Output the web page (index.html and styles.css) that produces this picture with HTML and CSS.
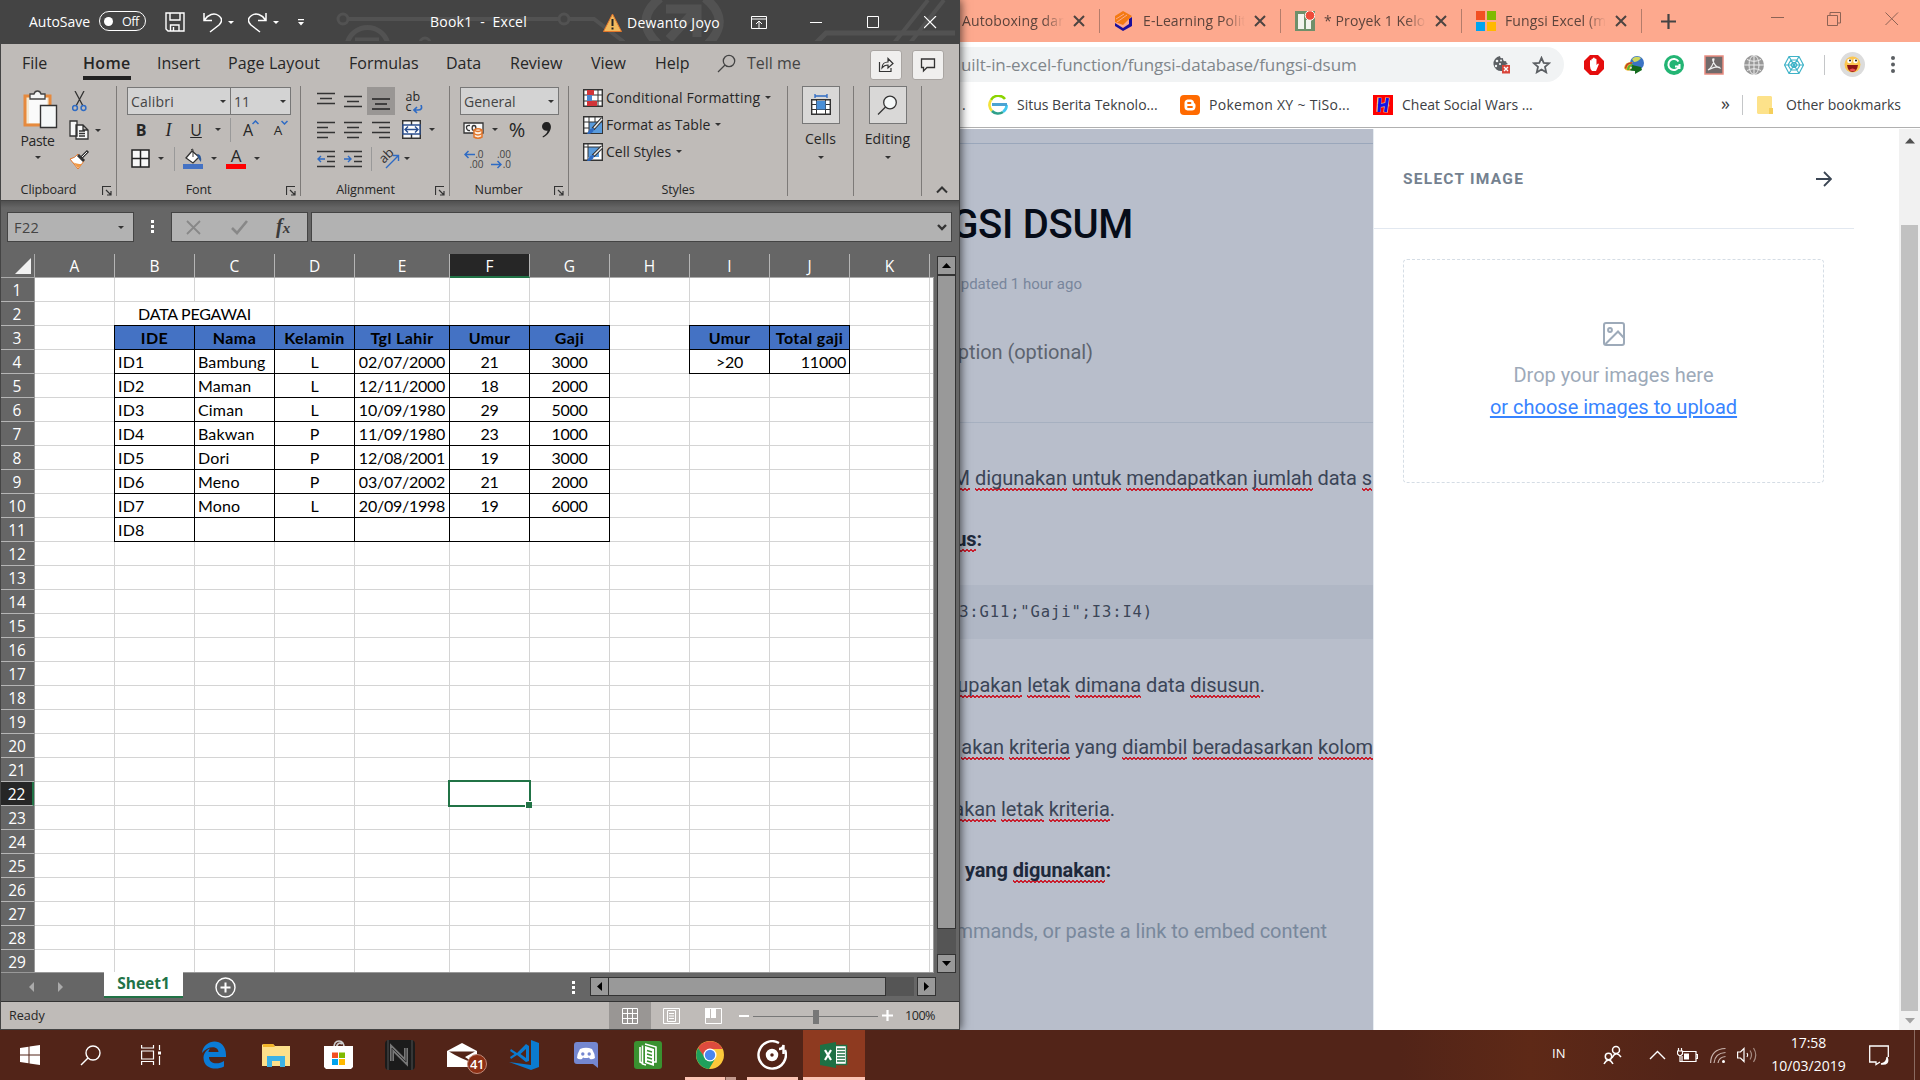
FILE: index.html
```html
<!DOCTYPE html>
<html lang="id">
<head>
<meta charset="utf-8">
<title>Book1 - Excel</title>
<link rel="stylesheet" href="styles.css">
</head>
<body>
<div class="desktop">
<main class="windows">

<section class="excel">
  <header class="xl-title">
    <svg class="circuit" width="624" height="41" viewBox="336 0 624 41" fill="none" stroke="#525252" stroke-width="5">
      <circle cx="343" cy="19" r="5" stroke-width="3"/><path d="M349 19H558M569 19H594L624 42M638 42" stroke-width="4"/><circle cx="564" cy="19" r="5" stroke-width="3"/>
      <path d="M347 44a21 21 0 0 1 41 0M355 40H379"/><circle cx="425" cy="43" r="5" stroke-width="3"/>
      <path d="M660 -2Q633 20 658 44M705 -2Q732 20 708 44" stroke-width="9"/><path d="M669 39L694 12M666 9H697V37" stroke-width="9"/>
      <path d="M816 43L826 33H955" stroke-width="5"/><path d="M894 43L928 0M910 43L944 0" stroke-width="4"/>
    </svg>
    <span>AutoSave</span>
    <span class="toggle"><i></i>Off</span>
    <svg width="20" height="20" viewBox="0 0 20 20" fill="none" stroke="#fff" stroke-width="1.4"><path d="M1 1H19V19H3L1 17ZM5 1V8H15V1M5.500 19V13H14V19M8.500 15V19"/></svg>
    <svg width="19" height="21" viewBox="0 0 19 21" fill="none" stroke="#fff" stroke-width="1.500"><path d="M1 1V8.500H9M1.500 8C5 2.500 11 .500 15.500 3.500S19 10 16 13L7 20"/></svg>
    <i class="caret light"></i>
    <svg width="19" height="21" viewBox="0 0 19 21" fill="none" stroke="#fff" stroke-width="1.500"><path d="M18 1V8.500H10M17.500 8C14 2.500 8 .500 3.500 3.500S0 10 3 13L12 20"/></svg>
    <i class="caret light"></i>
    <svg width="6" height="7" viewBox="0 0 6 7" fill="#fff"><path d="M0 0H6V1.300H0ZM0 3H6L3 6.500Z"/></svg>
    <span class="doc">Book1&nbsp; -&nbsp; Excel</span>
    <svg width="19" height="19" viewBox="0 0 19 19"><path d="M9.500 1L18.500 18.500H.500Z" fill="#f3ba5d" stroke="#e2762b"/><path d="M9.500 6V13M9.500 14.500V16.500" stroke="#222" stroke-width="2"/></svg>
    <span class="user">Dewanto Joyo</span>
    <svg width="16" height="13" viewBox="0 0 16 13" fill="none" stroke="#fff"><path d="M.500.500H15.500V12.500H.500ZM.500 3H15.500M8 12V5M5 8L8 5L11 8"/></svg>
    <svg width="13" height="13" viewBox="0 0 13 13" stroke="#fff"><path d="M0 6.500H12"/></svg>
    <svg width="13" height="13" viewBox="0 0 13 13" fill="none" stroke="#fff"><path d="M.500.500H11.500V11.500H.500Z"/></svg>
    <svg width="13" height="13" viewBox="0 0 13 13" stroke="#fff" stroke-width="1.200"><path d="M0 0L12 12M12 0L0 12"/></svg>
  </header>

  <nav class="xl-tabs">
    <span>File</span><b>Home</b><span>Insert</span><span class="wide">Page Layout</span><span>Formulas</span><span>Data</span><span>Review</span><span>View</span><span>Help</span>
    <svg width="19" height="19" viewBox="0 0 19 19" fill="none" stroke="#444" stroke-width="1.300"><circle cx="12" cy="7" r="5.700"/><path d="M8 11L1 18"/></svg>
    <span class="tell">Tell me</span>
    <button><svg width="16" height="16" viewBox="0 0 16 16" fill="none" stroke="#333" stroke-width="1.200"><path d="M1.500 5V14.500H13V11M4 11C4 7 7 5 10 5V1.500L15 6.500L10 11V8C7 8 5.500 9 4 11Z"/></svg></button>
    <button><svg width="16" height="16" viewBox="0 0 16 16" fill="none" stroke="#333" stroke-width="1.300"><path d="M1.500 2H14.500V10.500H7L3.500 14V10.500H1.500Z"/></svg></button>
  </nav>

  <div class="ribbon">
    <div class="group clipboard">
      <div class="body">
        <div class="paste">
          <svg width="36" height="40" viewBox="0 0 36 40"><path d="M2 6H27V35H2Z" fill="#f4ead4" stroke="#e68a3e" stroke-width="3"/><path d="M6 8H24V33H6Z" fill="#fafafa"/><path d="M7 9V4H11C12 0 17 0 18 4H22V9Z" fill="#f4f6f6" stroke="#444" stroke-width="1.300"/><path d="M17.500 15.500H33.500V37.500H17.500Z" fill="#f5f8f8" stroke="#333" stroke-width="1.400"/></svg>
          <span>Paste</span><i class="caret"></i>
        </div>
        <div class="clip-tools">
          <svg width="16" height="21" viewBox="0 0 16 21" fill="none"><path d="M3 0L11 15M12 0L4 15" stroke="#333" stroke-width="1.300"/><circle cx="3" cy="17" r="2.400" stroke="#2e6bc4" stroke-width="1.500"/><circle cx="11.500" cy="17" r="2.400" stroke="#2e6bc4" stroke-width="1.500"/></svg>
          <i></i>
          <svg width="21" height="21" viewBox="0 0 21 21" fill="#f8f8f8" stroke="#333" stroke-width="1.300"><path d="M1 1H8V16H1ZM7 5H14L19 10V19H7ZM14 5V10H19M10 11H16M10 13.500H16M10 16H16"/></svg>
          <i class="caret"></i>
          <svg width="21" height="20" viewBox="0 0 21 20"><path d="M1 9Q6 8 9 4L15 11Q12 15 9 19Z" fill="#fff" stroke="#e2762b"/><path d="M4 12L9 18L13 14Q7 14 4 12" fill="#f19a45"/><path d="M9 5L15 11M12 8L19 1" stroke="#333" stroke-width="3"/><path d="M13 7L18 2" stroke="#eee"/></svg>
          <i></i>
        </div>
      </div>
      <footer><span>Clipboard</span><svg class="launch"><use href="#launch"/></svg></footer>
    </div>

    <div class="group font">
      <div class="combos"><span class="combo cf">Calibri<i class="caret"></i></span><span class="combo cs">11<i class="caret"></i></span></div>
      <div class="row r-font1"><b class="g">B</b><em class="g">I</em><u class="g">U</u><i class="caret"></i><i class="bar"></i><span class="g grow">A<svg width="7" height="5" viewBox="0 0 7 5" fill="none" stroke="#2e6bc4" stroke-width="1.500"><path d="M.500 4L3.500 1L6.500 4"/></svg></span><span class="g shrink">A<svg width="7" height="5" viewBox="0 0 7 5" fill="none" stroke="#2e6bc4" stroke-width="1.500"><path d="M.500 1L3.500 4L6.500 1"/></svg></span></div>
      <div class="row r-font2">
        <svg width="19" height="19" viewBox="0 0 19 19" fill="#f7f7f7" stroke="#222" stroke-width="1.500"><path d="M1 1H18V18H1ZM9.500 1V18M1 9.500H18"/></svg><i class="caret"></i><i class="bar"></i>
        <svg width="20" height="21" viewBox="0 0 20 21"><path d="M9 3L16 9L10 15L3 10Z" fill="#fff" stroke="#333" stroke-width="1.300"/><path d="M10 9V2Q10 0 8 2" fill="none" stroke="#333"/><path d="M14 6Q19 6 18 14Q16 12 15 9" fill="#2b5797"/><path d="M0 16H20V21H0Z" fill="#4472c4"/></svg><i class="caret"></i>
        <span class="fcolor">A</span><i class="caret"></i>
      </div>
      <footer><span>Font</span><svg class="launch"><use href="#launch"/></svg></footer>
    </div>

    <div class="group align">
      <div class="row r-al1">
        <svg width="18" height="18" viewBox="0 0 18 18" stroke="#333" stroke-width="1.400"><path d="M0 1.500H18M3 6.500H15M0 11.500H18"/></svg>
        <svg width="18" height="18" viewBox="0 0 18 18" stroke="#333" stroke-width="1.400"><path d="M0 4.500H18M3 9.500H15M0 14.500H18"/></svg>
        <span class="on"><svg width="18" height="18" viewBox="0 0 18 18" stroke="#222" stroke-width="1.400"><path d="M0 7H18M3 12H15M0 17H18"/></svg></span>
        <span class="wrap"><span>ab</span><span>c</span><svg width="10" height="9" viewBox="0 0 10 9" fill="none" stroke="#2e6bc4" stroke-width="1.600"><path d="M8 0Q10 5 5 5H1M4 2L1 5L4 8"/></svg></span>
      </div>
      <div class="row r-al2">
        <svg width="18" height="18" viewBox="0 0 18 18" stroke="#333" stroke-width="1.400"><path d="M0 1.500H18M0 6.500H11M0 11.500H18M0 16.500H11"/></svg>
        <svg width="18" height="18" viewBox="0 0 18 18" stroke="#333" stroke-width="1.400"><path d="M0 1.500H18M3 6.500H15M0 11.500H18M3 16.500H15"/></svg>
        <svg width="18" height="18" viewBox="0 0 18 18" stroke="#333" stroke-width="1.400"><path d="M0 1.500H18M7 6.500H18M0 11.500H18M7 16.500H18"/></svg>
        <svg width="19" height="19" viewBox="0 0 19 19" fill="none" stroke="#2b4f8f" stroke-width="1.400"><path d="M.700.700H18.300V18.300H.700Z" fill="#f8f8f8" stroke="#333"/><path d="M9.500 1V5M9.500 14V18" stroke="#333"/><path d="M1 5H18V14H1Z" fill="#fff"/><path d="M3 9.500H16M6 6.500L3 9.500L6 12.500M13 6.500L16 9.500L13 12.500"/></svg>
        <i class="caret"></i>
      </div>
      <div class="row r-al3">
        <svg width="18" height="18" viewBox="0 0 18 18" fill="none" stroke="#333" stroke-width="1.400"><path d="M0 1.500H18M10 6.500H18M10 11.500H18M0 16.500H18"/><path d="M8 9H1M4 6L1 9L4 12" stroke="#2e6bc4"/></svg>
        <svg width="18" height="18" viewBox="0 0 18 18" fill="none" stroke="#333" stroke-width="1.400"><path d="M0 1.500H18M10 6.500H18M10 11.500H18M0 16.500H18"/><path d="M0 9H7M4 6L7 9L4 12" stroke="#2e6bc4"/></svg>
        <i class="bar"></i>
        <svg class="orient" width="21" height="20" viewBox="0 0 21 20"><text x="0" y="0" transform="translate(5 15) rotate(-45)">ab</text><path d="M7 19L19 7M14 6.500H19.500V12" fill="none" stroke="#2e6bc4" stroke-width="1.400"/></svg>
        <i class="caret"></i>
      </div>
      <footer><span>Alignment</span><svg class="launch"><use href="#launch"/></svg></footer>
    </div>

    <div class="group number">
      <div class="combos"><span class="combo cg">General<i class="caret"></i></span></div>
      <div class="row r-n1">
        <svg width="22" height="18" viewBox="0 0 22 18" fill="none"><path d="M1 2H20V12H1Z" fill="#f8f8f8" stroke="#333" stroke-width="1.300"/><path d="M7 4.500Q3 4 3.500 7T7 9.500M11 4.500C8.500 4.500 8.500 9.500 11 9.500S13.500 4.500 11 4.500" stroke="#333" stroke-width="1.300"/><path d="M11 9V16Q15 18.500 19 16V9Q15 6.500 11 9" fill="#fbeee0" stroke="#e2762b" stroke-width="1.500"/><path d="M11 9Q15 12 19 9M11 12.500Q15 15.500 19 12.500" stroke="#e2762b" stroke-width="1.300"/></svg>
        <i class="caret"></i><span class="pct">%</span>
        <svg width="11" height="17" viewBox="0 0 11 17" fill="#222"><path d="M5 1C12 0 12 12 2 16.500L1.500 15.500C5 13.500 6.500 11.500 6.500 9.500C0 11 -1 2 5 1"/></svg>
      </div>
      <div class="row r-n2">
        <span class="dec"><span>.0</span><span>.00</span><svg class="dl" width="11" height="9" viewBox="0 0 11 9" fill="none" stroke="#2e6bc4" stroke-width="1.500"><path d="M11 4.500H1M4.500 1L1 4.500L4.500 8"/></svg></span>
        <span class="dec"><span>.00</span><span>.0</span><svg class="dr" width="11" height="9" viewBox="0 0 11 9" fill="none" stroke="#2e6bc4" stroke-width="1.500"><path d="M0 4.500H10M6.500 1L10 4.500L6.500 8"/></svg></span>
      </div>
      <footer><span>Number</span><svg class="launch"><use href="#launch"/></svg></footer>
    </div>

    <div class="group styles">
      <div class="style-row"><svg width="20" height="18" viewBox="0 0 20 18"><path d="M.700.700H19.300V17.300H.700Z" fill="#fff" stroke="#333" stroke-width="1.400"/><path d="M.700 6H19M.700 12H19M5 1V17M15 1V17" stroke="#333"/><path d="M4 1H11V6H4ZM4 12H14V17H4Z" fill="#d13438"/><path d="M4 6H9V12H4Z" fill="#4a86d0"/></svg><span class="cfm">Conditional Formatting</span><i class="caret"></i></div>
      <div class="style-row"><svg width="20" height="18" viewBox="0 0 20 18"><path d="M.700.700H19.300V17.300H.700Z" fill="#fff" stroke="#333" stroke-width="1.400"/><path d="M6 6H19V17H6Z" fill="#5a9bdc"/><path d="M.700 6H19M.700 12H6M6 1V17M12 1V6" stroke="#333"/><path d="M19 3L10 13" stroke="#333" stroke-width="3.500"/><path d="M19 3L11 12" stroke="#eee" stroke-width="1.500"/><path d="M4 18Q7 11 11 12Q11 18 4 18" fill="#2e6bc4"/></svg><span>Format as Table</span><i class="caret"></i></div>
      <div class="style-row"><svg width="20" height="18" viewBox="0 0 20 18"><path d="M.700.700H19.300V17.300H.700Z" fill="#fff" stroke="#333" stroke-width="1.400"/><path d="M5 4H16V14H5Z" fill="#5a9bdc"/><path d="M.700 4H19M5 1V17" stroke="#333"/><path d="M19 4L10 13" stroke="#333" stroke-width="3.500"/><path d="M19 4L11 12" stroke="#eee" stroke-width="1.500"/><path d="M4 18Q7 11 11 12Q11 18 4 18" fill="#2e6bc4"/></svg><span>Cell Styles</span><i class="caret"></i></div>
      <footer><span>Styles</span></footer>
    </div>

    <div class="group big">
      <span class="tile"><svg width="20" height="22" viewBox="0 0 20 22"><path d="M.700 5.700H19.300V20.300H.700Z" fill="#fff" stroke="#333" stroke-width="1.400"/><path d="M.700 10.500H19M.700 15.500H19M5.500 6V20M14.500 6V20" stroke="#333"/><path d="M5.500 7H14.500V15.500H5.500Z" fill="#4a8fd6"/><path d="M4 2H16M4 0V4M16 0V4" stroke="#2e6bc4" stroke-width="1.300"/></svg></span>
      <span>Cells</span><i class="caret"></i>
    </div>
    <div class="group big">
      <span class="tile"><svg width="21" height="21" viewBox="0 0 21 21" fill="#f5f8f8" stroke="#333" stroke-width="1.300"><circle cx="13" cy="7.500" r="6.300"/><path d="M8.500 12L1 19.500"/></svg></span>
      <span>Editing</span><i class="caret"></i>
    </div>
    <div class="group end"><svg width="12" height="8" viewBox="0 0 12 8" fill="none" stroke="#333" stroke-width="2"><path d="M1 6.500L6 1.500L11 6.500"/></svg></div>
  </div>

  <div class="formula">
    <span class="namebox">F22<i class="caret"></i></span>
    <span class="dots"><i></i><i></i><i></i></span>
    <span class="fx">
      <svg width="15" height="15" viewBox="0 0 15 15" stroke="#888" stroke-width="1.800"><path d="M1 1L14 14M14 1L1 14"/></svg>
      <svg width="17" height="15" viewBox="0 0 17 15" fill="none" stroke="#888" stroke-width="2.600"><path d="M1 8L6 13L16 1"/></svg>
      <em>f<small>x</small></em>
    </span>
    <span class="fbar"><svg width="10" height="7" viewBox="0 0 10 7" fill="none" stroke="#333" stroke-width="2.400"><path d="M1 1L5 5L9 1"/></svg></span>
  </div>

  <div class="sheet-area">
    <div class="sheet">
      <span class="corner"><svg width="16" height="16" viewBox="0 0 16 16"><path d="M16 0V16H0Z" fill="#f1f1f1"/></svg></span>
      <div class="heads"><span>A</span><span>B</span><span>C</span><span>D</span><span class="e">E</span><span class="sel">F</span><span>G</span><span>H</span><span>I</span><span>J</span><span>K</span><span></span></div>
      <div class="nums"><span>1</span><span>2</span><span>3</span><span>4</span><span>5</span><span>6</span><span>7</span><span>8</span><span>9</span><span>10</span><span>11</span><span>12</span><span>13</span><span>14</span><span>15</span><span>16</span><span>17</span><span>18</span><span>19</span><span>20</span><span>21</span><span class="sel">22</span><span>23</span><span>24</span><span>25</span><span>26</span><span>27</span><span>28</span><span>29</span></div>
      <div class="canvas">
        <i class="col c1"></i><i class="col c2"></i><i class="col c3"></i><i class="col c4"></i><i class="col c5"></i><i class="col c6"></i><i class="col c7"></i><i class="col c8"></i><i class="col c9"></i><i class="col c10"></i><i class="col c11"></i>
        <div class="merged">DATA PEGAWAI</div>
        <div class="table main">
          <b>IDE</b><b>Nama</b><b>Kelamin</b><b>Tgl Lahir</b><b>Umur</b><b>Gaji</b>
          <span>ID1</span><span>Bambung</span><span>L</span><span>02/07/2000</span><span>21</span><span>3000</span>
          <span>ID2</span><span>Maman</span><span>L</span><span>12/11/2000</span><span>18</span><span>2000</span>
          <span>ID3</span><span>Ciman</span><span>L</span><span>10/09/1980</span><span>29</span><span>5000</span>
          <span>ID4</span><span>Bakwan</span><span>P</span><span>11/09/1980</span><span>23</span><span>1000</span>
          <span>ID5</span><span>Dori</span><span>P</span><span>12/08/2001</span><span>19</span><span>3000</span>
          <span>ID6</span><span>Meno</span><span>P</span><span>03/07/2002</span><span>21</span><span>2000</span>
          <span>ID7</span><span>Mono</span><span>L</span><span>20/09/1998</span><span>19</span><span>6000</span>
          <span>ID8</span><span></span><span></span><span></span><span></span><span></span>
        </div>
        <div class="table side"><b>Umur</b><b>Total gaji</b><span>&gt;20</span><span class="right">11000</span></div>
        <div class="cursor"></div>
      </div>
    </div>
    <div class="vscroll">
      <span class="sbtn"><svg width="9" height="5" viewBox="0 0 9 5"><path d="M0 5L4.500 0L9 5Z"/></svg></span>
      <span class="vthumb"></span><span class="vtrack"></span>
      <span class="sbtn"><svg width="9" height="5" viewBox="0 0 9 5"><path d="M0 0L4.500 5L9 0Z"/></svg></span>
    </div>
  </div>

  <div class="sheetbar">
    <svg width="5" height="10" viewBox="0 0 5 10" fill="#aaa"><path d="M5 0V10L0 5Z"/></svg>
    <svg width="5" height="10" viewBox="0 0 5 10" fill="#aaa"><path d="M0 0V10L5 5Z"/></svg>
    <b class="sheet-tab">Sheet1</b>
    <svg class="add" width="21" height="21" viewBox="0 0 21 21" fill="none" stroke="#fff"><circle cx="10.500" cy="10.500" r="9.500" stroke-width="1.400"/><path d="M10.500 5.500V15.500M5.500 10.500H15.500" stroke-width="2"/></svg>
    <span class="dots"><i></i><i></i><i></i></span>
    <div class="hscroll">
      <span class="sbtn"><svg width="5" height="9" viewBox="0 0 5 9"><path d="M5 0V9L0 4.500Z"/></svg></span>
      <span class="hthumb"></span><span class="htrack"></span>
      <span class="sbtn"><svg width="5" height="9" viewBox="0 0 5 9"><path d="M0 0V9L5 4.500Z"/></svg></span>
    </div>
  </div>

  <footer class="status">
    <span class="ready">Ready</span>
    <span class="view on"><svg width="16" height="16" viewBox="0 0 16 16" fill="none" stroke="#fff"><path d="M.500.500H15.500V15.500H.500ZM5.500 0V16M10.500 0V16M0 5.500H16M0 10.500H16"/></svg></span>
    <span class="view"><svg width="17" height="16" viewBox="0 0 17 16" fill="none" stroke="#fff"><path d="M.500.500H16.500V15.500H.500ZM4.500 2.500H12.500V13.500H4.500ZM6 5.500H11M6 8H11M6 10.500H11"/></svg></span>
    <span class="view"><svg width="17" height="16" viewBox="0 0 17 16" fill="none" stroke="#fff"><path d="M.500.500H16.500V15.500H.500Z"/><path d="M0 0H5V10H0ZM6 0H11V10H6Z" fill="#fff" stroke="none"/></svg></span>
    <span class="zoom"><i class="minus"></i><i class="rail"><i></i></i><svg width="11" height="11" viewBox="0 0 11 11" stroke="#fff" stroke-width="2.200"><path d="M5.500 0V11M0 5.500H11"/></svg></span>
    <span class="pc">100%</span>
  </footer>
</section>

<section class="browser">
  <header class="tabs">
    <div class="tab first"><span>Autoboxing dan</span><svg class="x"><use href="#x"/></svg></div>
    <div class="tab"><svg width="20" height="20" viewBox="0 0 20 20"><path d="M1 5L9 0L18 5L9 14L1 11Z" fill="#f47a12"/><path d="M2 8L10 3M3 11L13 4" stroke="#fda98e"/><path d="M1 12L9 17L15 13V8L18 6V15L9 20L1 15Z" fill="#1a0f9c"/></svg><span>E-Learning Polit</span><svg class="x"><use href="#x"/></svg></div>
    <div class="tab"><svg width="20" height="20" viewBox="0 0 20 20"><path d="M0 0H20V20H0Z" fill="#6f8f6a"/><path d="M3 3H9V18H3ZM11 9H16V18H11Z" fill="#f3f3ee"/><circle cx="15" cy="4.500" r="4.800" fill="#ee4b3a" stroke="#fff"/></svg><span>* Proyek 1 Kelo</span><svg class="x"><use href="#x"/></svg></div>
    <div class="tab last"><svg width="20" height="20" viewBox="0 0 20 20"><path d="M0 0H9V9H0Z" fill="#f25022"/><path d="M11 0H20V9H11Z" fill="#7fba00"/><path d="M0 11H9V20H0Z" fill="#00a4ef"/><path d="M11 11H20V20H11Z" fill="#ffb900"/></svg><span>Fungsi Excel (m</span><svg class="x"><use href="#x"/></svg></div>
    <svg class="plus" width="15" height="15" viewBox="0 0 15 15" stroke="#444" stroke-width="2.200"><path d="M7.500 0V15M0 7.500H15"/></svg>
    <div class="winctl">
      <svg width="14" height="14" viewBox="0 0 14 14" stroke="#8d6355"><path d="M0 5.500H13"/></svg>
      <svg width="14" height="14" viewBox="0 0 14 14" fill="none" stroke="#8d6355"><path d="M.500 3.500H10.500V13.500H.500ZM3 3V.500H13.500V11H11"/></svg>
      <svg width="14" height="14" viewBox="0 0 14 14" stroke="#8d6355"><path d="M.500.500L13 13M13 .500L.500 13"/></svg>
    </div>
  </header>

  <div class="address">
    <div class="pill">
      <span>uilt-in-excel-function/fungsi-database/fungsi-dsum</span>
      <svg width="19" height="19" viewBox="0 0 19 19"><path d="M8 1A7.500 7.500 0 1 0 10 16V11L16 9Q14 8 14 6Q11 7 11 3Q8 4 8 1" fill="#5b5f63"/><g fill="#f1f3f4"><circle cx="5" cy="6" r="1.300"/><circle cx="8" cy="9" r="1.100"/><circle cx="4" cy="11" r="1.200"/><circle cx="9" cy="5.500" r="1"/></g><path d="M10 10H18V18.500H10Z" fill="#d9453a"/><path d="M12 12L16 16M16 12L12 16" stroke="#fff" stroke-width="1.400"/></svg>
      <svg class="star" width="19" height="18" viewBox="0 0 19 18" fill="none" stroke="#5b5f63" stroke-width="1.800"><path d="M9.500 1.800L11.700 6.800L17 7.300L13 10.900L14.200 16.300L9.500 13.500L4.800 16.300L6 10.900L2 7.300L7.300 6.800Z"/></svg>
    </div>
    <div class="ext">
      <svg width="20" height="20" viewBox="0 0 20 20"><path d="M6 0H14L20 6V14L14 20H6L0 14V6Z" fill="#e50d0d"/><path d="M6 11V5.500Q6.800 4.500 7.500 5.500V4Q8.300 3 9 4V3Q10 2 10.800 3V4Q12 3 12.500 4.500V10L14 8.500Q15.500 8.500 14.500 10L12 16H8Q6 14 6 11" fill="#fff"/></svg>
      <svg width="20" height="20" viewBox="0 0 20 20"><circle cx="13" cy="8" r="7" fill="#3b74c5"/><path d="M8 4Q12 0 17 3Q14 7 10 7Z" fill="#cfd85e"/><path d="M0 13Q1 6 9 7Q5 10 7 15Q2 17 0 13" fill="#e9b529"/><path d="M1.500 13.500Q2.500 7.500 8 8" fill="none" stroke="#c03c2a" stroke-width="1.500"/><path d="M4 15Q4 10 9 10" fill="none" stroke="#5cb531" stroke-width="2"/><path d="M8 10L17 12L18 15L11 19L11 16Q7 16 5 15Q9 14 8 10" fill="#146b1e"/></svg>
      <svg width="20" height="20" viewBox="0 0 20 20"><circle cx="10" cy="10" r="10" fill="#23b574"/><path d="M14.500 6.500A5.500 5.500 0 1 0 15 11.500H11M15.500 9V14" fill="none" stroke="#fff" stroke-width="2"/></svg>
      <svg width="20" height="20" viewBox="0 0 20 20"><path d="M1 1H19V19H1Z" fill="#716a6a" stroke="#e98c80" stroke-width="1.500"/><path d="M4 15Q9 12 10 4Q8 3 9 6Q11 12 16 13Q14 10 4 15" fill="none" stroke="#eee" stroke-width="1.200"/></svg>
      <svg width="20" height="20" viewBox="0 0 20 20" fill="none"><circle cx="10" cy="10" r="10" fill="#999"/><path d="M10 0V20M0 10H20M3 4.500Q10 8 17 4.500M3 15.500Q10 12 17 15.500" stroke="#eee"/><ellipse cx="10" cy="10" rx="5" ry="9.500" stroke="#eee"/></svg>
      <svg width="20" height="20" viewBox="0 0 20 20" fill="none" stroke="#3fb3c8" stroke-width="1.200"><path d="M5 1.500H15L19.500 10L15 18.500H5L.500 10ZM7 5H13L16 10L13 15H7L4 10ZM8.500 7.500H11.500L13 10L11.500 12.500H8.500L7 10ZM5 1.500L15 18.500M15 1.500L5 18.500M0 10H20"/></svg>
      <i class="vsep"></i>
      <svg width="25" height="25" viewBox="0 0 25 25"><circle cx="12.500" cy="12.500" r="12.500" fill="#dcdcdc"/><circle cx="12.500" cy="12.500" r="8" fill="#fbc650"/><path d="M7 13H18Q17 20 12.500 20T7 13" fill="#8c1414"/><path d="M9 18Q12.500 15 16 18Q13 20.500 9 18" fill="#ee5050"/><circle cx="9.500" cy="9" r="2.300" fill="#fff"/><circle cx="15.500" cy="9" r="2.300" fill="#fff"/><circle cx="10" cy="8.500" r=".900"/><circle cx="16" cy="8.500" r=".900"/></svg>
      <svg width="4" height="17" viewBox="0 0 4 17" fill="#5b5f63"><circle cx="2" cy="2" r="2"/><circle cx="2" cy="8.500" r="2"/><circle cx="2" cy="15" r="2"/></svg>
    </div>
  </div>

  <div class="bookmarks">
    <span>.</span>
    <svg width="20" height="20" viewBox="0 0 20 20" fill="none" stroke-width="2.600"><path d="M17 4A8.500 8.500 0 0 0 3 5" stroke="#8bd400"/><path d="M3 5A8.500 8.500 0 0 0 4 16" stroke="#f3e23a"/><path d="M4 16A8.500 8.500 0 0 0 15 17" stroke="#2fa08a"/><path d="M15 17Q19 14 18.500 10" stroke="#41c8f0"/><path d="M4 9.500H19" stroke="#4ba3d3" stroke-width="3"/></svg>
    <span>Situs Berita Teknolo...</span>
    <svg width="20" height="20" viewBox="0 0 20 20"><rect width="20" height="20" rx="4" fill="#ff6a00"/><path d="M7.500 4.500H11Q14 5 14 8Q15.500 8.500 15.500 10V12Q15 15.500 12 15.500H7.500Q4.500 15 4.500 12V8Q4.500 5 7.500 4.500" fill="#fff"/><path d="M8 8H10.500M8 12H12" stroke="#ff6a00" stroke-width="1.800" stroke-linecap="round"/></svg>
    <span class="loose">Pokemon XY ~ TiSo...</span>
    <svg width="20" height="20" viewBox="0 0 20 20"><path d="M0 0H20V20H0Z" fill="#f00"/><path d="M6.500 2.500L5.500 17M14.500 2.500L12.500 17.500M4 11L16 9" stroke="#e9c08a" stroke-width="4.500"/><path d="M7 3L6 17M14.500 3L12.500 17M5 11L15 9" stroke="#1414e6" stroke-width="3"/></svg>
    <span>Cheat Social Wars ...</span>
    <span class="more">»</span>
    <i class="vsep"></i>
    <svg width="16" height="18" viewBox="0 0 16 18"><path d="M1 0H14L15 1V17L14 18H1L0 17V1Z" fill="#fde28a"/><path d="M12 12H16V18H12Z" fill="#f5cf5b"/></svg>
    <span>Other bookmarks</span>
  </div>

  <div class="viewport">
    <article class="page">
      <h1 class="line title"><span>GSI DSUM</span></h1>
      <p class="line meta"><span>pdated 1 hour ago</span></p>
      <p class="line desc"><span>ption (optional)</span></p>
      <hr>
      <p class="line p1"><span><s>M</s> <s>digunakan</s> <s>untuk</s> <s>mendapatkan</s> <s>jumlah</s> data <s>s</s></span></p>
      <p class="line p2"><b><s>us</s>:</b></p>
      <pre class="line code"><span>3:G11;"Gaji";I3:I4)</span></pre>
      <p class="line p3"><span><s>upakan</s> <s>letak</s> <s>dimana</s> data <s>disusun</s>.</span></p>
      <p class="line p4"><span><s>akan</s> <s>kriteria</s> yang <s>diambil</s> <s>beradasarkan</s> <s>kolom</s></span></p>
      <p class="line p5"><span><s>akan</s> <s>letak</s> <s>kriteria</s>.</span></p>
      <p class="line p6"><b>yang <s>digunakan</s>:</b></p>
      <p class="line p7"><span>mmands, or paste a link to embed content</span></p>
    </article>
    <aside class="panel">
      <header><h2>SELECT IMAGE</h2><svg width="16" height="16" viewBox="0 0 16 16" fill="none" stroke="#3b4654" stroke-width="1.800"><path d="M0 8H14.500M8 1L15 8L8 15"/></svg></header>
      <div class="drop">
        <svg width="22" height="24" viewBox="0 0 22 24" fill="none" stroke="#9daab9" stroke-width="2"><rect x="1" y="1" width="20" height="22" rx="2"/><circle cx="7" cy="8" r="1.900"/><path d="M2.500 22L15 9.500L21 16"/></svg>
        <p>Drop your images here</p>
        <a>or choose images to upload</a>
      </div>
    </aside>
    <div class="pscroll"><svg width="10" height="6" viewBox="0 0 10 6" fill="#505050"><path d="M0 5.500L5 0L10 5.500Z"/></svg><i></i><svg width="10" height="6" viewBox="0 0 10 6" fill="#a3a3a3"><path d="M0 0L5 5.500L10 0Z"/></svg></div>
  </div>
</section>
</main>

<footer class="taskbar">
  <div class="apps">
    <span class="sys"><svg width="20" height="20" viewBox="0 0 20 20" fill="#fff"><path d="M0 3L8.500 1.800V9.500H0ZM9.500 1.600L20 0V9.500H9.500ZM0 10.500H8.500V18.300L0 17ZM9.500 10.500H20V20L9.500 18.500Z"/></svg></span>
    <span class="sys"><svg width="21" height="21" viewBox="0 0 21 21" fill="none" stroke="#fff" stroke-width="1.400"><circle cx="13" cy="8" r="7"/><path d="M8 13L1 20"/></svg></span>
    <span class="sys tv"><svg width="21" height="20" viewBox="0 0 21 20" fill="none" stroke="#fff" stroke-width="1.200"><path d="M.600 0V3H12.500V0M.600 20V16.500H12.500V20M.600 6H12.500V14H.600ZM18.500 0V5M18.500 11V20"/><path d="M17 6.500H20V9.500H17Z" fill="#fff" stroke="none"/></svg></span>
    <span><svg width="26" height="28" viewBox="0 0 26 28"><path d="M1 12C3 -3 25 -4 25 14V16H8C8 23 17 24 23 20V25.500C14 30 2 27 2.500 16C3 11 7 8 9 7.500C8 9 7.500 10 7.500 11H17.500C17.500 5 7 4 1 12" fill="#0b7bd6"/></svg></span>
    <span><svg width="28" height="24" viewBox="0 0 28 24"><path d="M0 2L1 1H11L13 3H28V23H0Z" fill="#fde08b"/><path d="M1 1H11L13 4H1Z" fill="#f2b52a"/><path d="M5 13H23V24H18V18H10V24H5Z" fill="#3bb2e6"/></svg></span>
    <span><svg width="29" height="30" viewBox="0 0 29 30"><path d="M10 8Q10 1 15 1T20 8M12 8Q14 1 18 4" fill="none" stroke="#ccc" stroke-width="1.600"/><path d="M0 6H29V27L27 29H2L0 27Z" fill="#fff"/><path d="M8 12.500H14V18H8Z" fill="#f25022"/><path d="M15 12.500H21V18H15Z" fill="#7fba00"/><path d="M8 19H14V25H8Z" fill="#00a4ef"/><path d="M15 19H21V25H15Z" fill="#ffb900"/></svg></span>
    <span><svg width="30" height="30" viewBox="0 0 30 30"><rect width="30" height="30" rx="4" fill="#1b1b1b"/><path d="M3 0V30M27 0V30" stroke="#363636" stroke-width="2"/><path d="M7 21V8L21 22V8" fill="none" stroke="#777" stroke-width="4"/><path d="M7 21V8L21 22V8" fill="none" stroke="#333" stroke-width="1"/></svg></span>
    <span class="mail"><svg width="30" height="24" viewBox="0 0 30 24"><path d="M0 8L15 0L30 8V24H0Z" fill="#fff"/><path d="M2 8.500H28L18 14L27 20Q14 16 2 8.500" fill="#522418"/></svg><i>41</i></span>
    <span><svg width="30" height="30" viewBox="0 0 30 30" fill="#0b7bd0"><path d="M22 0L30 3V27L22 30L0 22L22 25Z"/><path d="M2 9L8 13L17 4L20 6V21L17 22L8 15L2 19L1 17L5.500 14L1 11ZM17 9L11.500 14L17 18Z" fill-rule="evenodd"/></svg></span>
    <span><svg width="24" height="26" viewBox="0 0 24 26"><path d="M3 0H21Q24 0 24 3V26L19 22H3Q0 22 0 19V3Q0 0 3 0" fill="#7487d0"/><path d="M6 7Q12 4.500 18 7Q21 12 21 16Q18 18 16 17L15 15.500Q12 16.500 9 15.500L8 17Q5 18 3 16Q3 12 6 7" fill="#fff"/><circle cx="8.800" cy="12" r="1.700" fill="#7487d0"/><circle cx="15.200" cy="12" r="1.700" fill="#7487d0"/></svg></span>
    <span><svg width="28" height="28" viewBox="0 0 28 28"><rect width="28" height="28" rx="3" fill="#3a9130"/><path d="M11 3L22 6V21L20 21M6 6V21L8 22M8.500 4.500V23L12 24" fill="none" stroke="#fff" stroke-width="1.600"/><path d="M11 5L20 8V25L11 22Z" fill="#fff"/><path d="M13 9.500L18 11M13 13L18 14.500M13 16.500L18 18M13 20L18 21.500" stroke="#3a9130" stroke-width="1.500"/></svg></span>
    <span class="run chrome"><svg width="28" height="28" viewBox="0 0 28 28"><circle cx="14" cy="14" r="14" fill="#fdc93a"/><path d="M2 7A14 14 0 0 1 26.500 8H14L8 16Z" fill="#dd4b3e"/><path d="M2 7A14 14 0 0 0 13 28L19 18H10Z" fill="#1fa05c"/><circle cx="14" cy="14" r="6.500" fill="#fff"/><circle cx="14" cy="14" r="5.200" fill="#4a86ee"/></svg></span>
    <span class="run"><svg width="30" height="30" viewBox="0 0 30 30" fill="none" stroke="#fff"><path d="M22 3A13.700 13.700 0 1 0 28 10" stroke-width="2.400"/><circle cx="15" cy="15" r="4" stroke-width="4.500"/><path d="M26.500 14V5Q26 9 22 9" stroke-width="2.400"/></svg></span>
    <span class="run active"><svg width="28" height="26" viewBox="0 0 28 26"><path d="M14 3.500H26.500V22.500H14Z" fill="#fff" stroke="#207245" stroke-width="1.500"/><path d="M17 7H25M17 10H25M17 13H25M17 16H25M17 19H25" stroke="#207245" stroke-width="1.500"/><path d="M0 3L16 0V26L0 23Z" fill="#1d7044"/><path d="M5 8L11 18M11 8L5 18" stroke="#fff" stroke-width="2.200"/></svg></span>
  </div>
  <div class="tray">
    <span class="in">IN</span>
    <svg width="19" height="20" viewBox="0 0 19 20" fill="none" stroke="#fff" stroke-width="1.500"><circle cx="13" cy="5" r="3.500"/><path d="M9 13Q13 5 18 12"/><circle cx="5.500" cy="11.500" r="3.200"/><path d="M1 19Q5.500 11 10 19"/></svg>
    <svg width="17" height="10" viewBox="0 0 17 10" fill="none" stroke="#fff" stroke-width="1.400"><path d="M1 9L8.500 1.500L16 9"/></svg>
    <svg width="21" height="15" viewBox="0 0 21 15" fill="none" stroke="#fff" stroke-width="1.200"><path d="M6 3.500H19V13.500H5V8M19 6.500H20.500V10.500H19M1.500 0V3M4.500 0V3M.500 3H5.500V6L4 7.500H2L.500 6ZM3 7.500V13.500H5"/><path d="M7 5.500H12V11.500H7Z" fill="#fff" stroke="none"/></svg>
    <svg width="16" height="17" viewBox="0 0 16 17" fill="none" stroke="#c9b4ad" stroke-width="1.200"><path d="M.600 16Q1 2 15.500 1.500M4 16Q5 6 15.500 5.500M8 16Q9 10 15.500 9.500"/><circle cx="13.500" cy="14.500" r="1.500" fill="#fff" stroke="none"/></svg>
    <svg width="21" height="18" viewBox="0 0 21 18" fill="none" stroke="#fff" stroke-width="1.200"><path d="M.600 6H3.500L7 2.500V15.500L3.500 12H.600ZM10 7Q11.500 9 10 11"/><path d="M13 4.500Q16 9 13 13.500M16.500 2Q21 9 16.500 16" stroke="#a58b82"/></svg>
    <span class="clock">17:58<br>10/03/2019</span>
    <svg width="21" height="21" viewBox="0 0 21 21" fill="none" stroke="#fff" stroke-width="1.300"><path d="M11 17L7 19.500V17H.700V1H19.300V12"/><path d="M18 12Q21 20 12 19Q18 18 18 12" fill="#fff"/></svg>
    <i class="peek"></i>
  </div>
</footer>
</div>

<svg class="defs" width="0" height="0">
  <symbol id="launch" viewBox="0 0 10 10"><path d="M.500 9V.500H9M4 4L8.500 8.500M9 5V9H5" fill="none" stroke="#333" stroke-width="1.200"/></symbol>
  <symbol id="x" viewBox="0 0 18 18"><path d="M4 4L14 14M14 4L4 14" stroke="#4d4441" stroke-width="2"/></symbol>
</svg>
</body>
</html>
```
FILE: styles.css
```css
* { box-sizing: border-box; }
body { margin: 0; width: 1920px; height: 1080px; overflow: hidden; font-family: "Open Sans", "Noto Sans", sans-serif; font-size: 14px; color: #262626; }
svg { display: block; flex: none; }
i { font-style: normal; }
h1, h2, p, pre { margin: 0; }
.defs { position: absolute; }
.desktop { display: grid; grid-template-rows: 1030px 50px; }
.windows { display: flex; height: 1030px; overflow: hidden; }

.caret { display: block; width: 0; height: 0; border: 3px solid transparent; border-top: 3.500px solid #333; border-bottom: 0; }
.caret.light { border-top-color: #fff; }

/* Excel window */
.excel { position: relative; z-index: 1; width: 960px; height: 1030px; flex: none; border: 1px solid #444; border-top: 0; background: #666; box-shadow: 1px 0 9px rgba(0, 0, 0, .65); display: grid; grid-template-rows: 44px 42px 115px 53px 719px 29px 27px; }
.xl-title { position: relative; background: #444; color: #fff; display: grid; grid-template-columns: 70px 66px 38px 25px 20px 25px 25px 132px 173px 24px 124px 59px 57px 57px 20px; align-items: center; justify-items: start; padding-left: 28px; white-space: nowrap; }
.xl-title > * { position: relative; }
.xl-title > span { top: -1px; }
.xl-title .circuit { position: absolute; left: 335px; top: 0; }
.toggle { width: 47px; height: 20px; border: 1.500px solid #fff; border-radius: 10px; display: flex; align-items: center; gap: 9px; padding-left: 4px; font-size: 12.500px; letter-spacing: -.500px; }
.toggle i { width: 9px; height: 9px; border-radius: 50%; background: #fff; }
.doc { letter-spacing: .230px; }
.xl-title .user { letter-spacing: .260px; top: 0; }

.xl-tabs { background: #bfbbb8; font-size: 16px; display: grid; grid-template-columns: 61px 74px 71px 121px 97px 64px 81px 64px 62px 30px 123px 42px 32px; align-items: center; justify-items: start; padding: 0 0 4px 21px; white-space: nowrap; }
.xl-tabs b { position: relative; font-weight: 600; letter-spacing: .300px; }
.xl-tabs b::after { content: ""; position: absolute; left: 0; right: -1px; bottom: -6px; height: 4px; background: #222; }
.xl-tabs .wide { letter-spacing: .110px; }
.tell { color: #444; }
.xl-tabs button { width: 32px; height: 30px; margin-top: 3px; border: 1px solid #a9a5a2; border-radius: 3px; background: #f0efee; padding: 0; display: grid; place-items: center; }

.ribbon { background: #bfbbb8; border-bottom: 1px solid #444; display: grid; grid-template-columns: 116px 184px 149px 119px 219px 66px 68px 37px; }
.group { height: 110px; border-right: 1px solid #7d7a78; display: flex; flex-direction: column; }
.group footer { position: relative; margin-top: auto; height: 18px; margin-bottom: -4px; font-size: 12.600px; line-height: 16px; text-align: center; letter-spacing: -.150px; padding-right: 20px; }
.font footer { padding-right: 20px; }
.align footer { padding-right: 19px; }
.number footer { padding-right: 21px; }
.launch { position: absolute; right: 4px; top: 4px; width: 10px; height: 10px; }
.body { display: grid; grid-template-columns: 66px 1fr; }
.paste { display: flex; flex-direction: column; align-items: center; padding: 4px 0 0 7px; }
.paste svg { margin-left: 6px; }
.paste span { line-height: 18px; margin: 2px 0 6px; letter-spacing: -.300px; }
.clip-tools { display: grid; grid-template: repeat(3, 29px) / 25px 12px; align-items: center; justify-items: center; padding-top: 1px; }
.combos { display: flex; padding: 1px 0 0 10px; height: 29px; }
.combo { height: 28px; border: 1.500px solid #777; background: #d3d3d3; display: flex; align-items: center; justify-content: space-between; padding: 0 4px 0 3px; color: #444; }
.cf { width: 104px; letter-spacing: .200px; }
.cs { width: 61px; margin-left: -1px; }
.cg { width: 99px; }
.row { display: grid; height: 29px; align-items: center; justify-items: center; padding-left: 10px; justify-content: start; }
.r-font1 { grid-template-columns: 28px 27px 28px 16px 8px 34px 26px; }
.r-font2 { grid-template-columns: 26px 16px 10px 28px 14px 30px 12px; }
.r-al1, .r-al2, .r-al3 { padding-left: 11px; }
.r-al1 { grid-template-columns: 27px 28px 28px 38px; }
.r-al2 { grid-template-columns: 27px 28px 28px 32px 10px; }
.r-al3 { grid-template-columns: 27px 28px 8px 29px 6px; }
.r-n1 { grid-template-columns: 28px 14px 30px 28px; }
.r-n2 { grid-template-columns: 28px 27px; }
.bar { width: 1px; height: 24px; background: #999; }
.g { font-size: 16px; line-height: 20px; }
em.g { font-family: "Liberation Serif", serif; font-size: 18px; }
.grow, .shrink { display: flex; }
.grow svg, .shrink svg { margin-left: -1px; }
.shrink { font-size: 13.500px; }
.fcolor { font-size: 17px; line-height: 17px; width: 20px; text-align: center; border-bottom: 5px solid #f00; margin-top: -2px; }
.on { background: #999694; }
.align .on { width: 28px; height: 28px; display: grid; place-items: center; }
.wrap { font-size: 12.500px; line-height: 10px; width: 17px; position: relative; display: grid; margin-top: 2px; }
.wrap svg { position: absolute; left: 7px; bottom: -2px; }
.orient { overflow: visible; }
.orient text { font-size: 13px; fill: #333; }
.pct { font-size: 20px; line-height: 22px; }
.dec { position: relative; display: grid; font-size: 10px; line-height: 10px; width: 19px; text-align: right; color: #444; letter-spacing: 0; }
.dl { position: absolute; left: -1px; top: 1px; }
.dr { position: absolute; left: -1px; bottom: 0; }
.style-row { display: flex; align-items: center; height: 27px; padding-left: 14px; white-space: nowrap; }
.style-row span { margin: 0 5px 0 3px; }
.style-row .cfm { letter-spacing: .180px; }
.styles footer { padding-right: 0; }
.styles .style-row:first-child { margin-top: -2px; }
.big { align-items: center; letter-spacing: .150px; }
.tile { width: 38px; height: 38px; border: 1px solid #777; background: #d9d8d7; display: grid; place-items: center; margin-bottom: 5px; }
.big .caret { margin-top: 8px; }
.end { border: 0; justify-content: flex-end; align-items: center; padding: 0 0 2px 3px; }

.formula { display: grid; grid-template-columns: 144px 20px 138px 643px; align-items: start; padding: 11px 0 0 6px; background: linear-gradient(#505050, #666 7px); }
.formula > * { height: 30px; }
.namebox, .fx, .fbar { background: #b2b2b2; border: 1px solid #444; display: flex; align-items: center; }
.namebox { width: 127px; justify-content: space-between; padding: 0 9px 0 6px; color: #444; font-size: 14.500px; letter-spacing: .400px; }
.dots { display: flex; flex-direction: column; gap: 2px; }
.dots i { width: 3px; height: 3px; background: #fff; }
.formula .dots { padding-top: 8px; }
.fx { width: 137px; padding-left: 14px; }
.fx svg + svg { margin-left: 30px; }
.fx em { margin-left: 28px; font: italic bold 20px/24px "Liberation Serif", serif; color: #3a3a3a; }
.fx small { font-size: 15px; }
.fbar { margin-left: 2px; justify-content: flex-end; padding-right: 4px; }

/* Sheet */
.sheet-area { display: flex; }
.sheet { width: 933px; display: grid; grid-template: 24px 695px / 34px 899px; }
.corner { border-bottom: 1px solid #aaa; border-right: 1px solid #aaa; display: grid; justify-content: end; align-content: end; padding: 0 3px 3px 0; }
.heads { display: grid; grid-template-columns: repeat(4, 80px) 95px repeat(6, 80px) 4px; border-bottom: 1px solid #aaa; color: #fff; font-size: 15.500px; line-height: 24px; text-align: center; }
.heads span { border-right: 1px solid #b5b5b5; }
.heads span:last-child { border: 0; }
.heads .sel { background: #262626; height: 24px; border-bottom: 2px solid #217346; }
.nums { color: #fff; font-size: 15.500px; line-height: 24px; text-align: center; border-right: 1px solid #999; border-bottom: 1px solid #999; display: grid; grid-template-rows: repeat(28, 24px) 22px; }
.nums span { border-bottom: 1px solid #b5b5b5; padding-right: 1px; }
.nums span:last-child { border: 0; }
.nums .sel { background: #262626; border-right: 2px solid #217346; padding: 0; }
.canvas { position: relative; background: #fff; border-right: 1px solid #999; border-bottom: 1px solid #999; display: grid; grid-template: repeat(28, 24px) 22px / repeat(4, 80px) 95px repeat(6, 80px) 3px; font-family: Lato, sans-serif; font-size: 16px; color: #000; background-image: repeating-linear-gradient(transparent 0 23px, #d4d4d4 23px 24px); overflow: hidden; }
.col { grid-row: 1 / -1; border-right: 1px solid #d4d4d4; }
.c1 { grid-column: 1; } .c2 { grid-column: 2; } .c3 { grid-column: 3; } .c4 { grid-column: 4; } .c5 { grid-column: 5; } .c6 { grid-column: 6; } .c7 { grid-column: 7; } .c8 { grid-column: 8; } .c9 { grid-column: 9; } .c10 { grid-column: 10; } .c11 { grid-column: 11; }
.merged { grid-area: 2 / 2 / 3 / 4; background: #fff; margin-right: 1px; line-height: 24px; text-align: center; letter-spacing: -.250px; }
.table { display: grid; grid-auto-rows: 24px; margin: -1px 0 0 -1px; border: solid #000; border-width: 1px 0 0 1px; background: #fff; line-height: 24px; white-space: nowrap; }
.table > * { border: solid #000; border-width: 0 1px 1px 0; text-align: center; letter-spacing: -.240px; }
.table b { background: #4472c4; letter-spacing: .400px; }
.main { grid-area: 3 / 2 / 12 / 8; grid-template-columns: 80px 80px 80px 95px 80px 80px; }
.main span:nth-child(6n+1), .main span:nth-child(6n+2) { text-align: left; padding-left: 3px; letter-spacing: .150px; }
.side { grid-area: 3 / 9 / 5 / 11; grid-template-columns: 80px 80px; }
.side .right { text-align: right; padding-right: 3px; }
.cursor { position: relative; grid-area: 22 / 6; margin: -2px -1px -1px -2px; border: 2px solid #217346; }
.cursor::after { content: ""; position: absolute; right: -3px; bottom: -3px; width: 6px; height: 6px; background: #217346; border: solid #fff; border-width: 1px 0 0 1px; }
.vscroll { width: 19px; margin: 2px 0 0 3px; height: 717px; display: flex; flex-direction: column; background: #555; }
.sbtn { width: 19px; height: 19px; flex: none; background: #999; border: 1px solid #333; display: grid; place-items: center; }
.vthumb { height: 654px; background: #999; border: 1px solid #333; }
.vtrack { flex: 1; }

.sheetbar { display: grid; grid-template-columns: 29px 46px 111px 357px 17px 346px; align-items: center; padding-left: 28px; border-bottom: 1px solid #333; }
.sheet-tab { align-self: start; width: 79px; height: 26px; margin-top: -1px; background: #fff; border-bottom: 2px solid #217346; color: #217346; font-size: 15.500px; line-height: 22px; text-align: center; position: relative; }
.hscroll { display: flex; width: 346px; height: 19px; background: #666; margin: -1px 0 0 1px; }
.hthumb { width: 278px; margin-left: -1px; background: #999; border: 1px solid #333; }
.htrack { width: 28px; background: #555; margin-right: 3px; }
.status { background: #bfbbb8; display: grid; grid-template-columns: 608px 42px 41px 42px 171px 40px; align-items: center; font-size: 12.600px; }
.ready { padding-left: 8px; }
.view { height: 27px; display: grid; place-items: center; }
.zoom { display: flex; align-items: center; padding-left: 5px; }
.minus { width: 10px; height: 2px; background: #fff; }
.rail { width: 125px; height: 1px; background: #777; margin: 2px 4px 0 4px; display: flex; justify-content: center; align-items: center; }
.rail i { width: 6px; height: 14px; background: #777; flex: none; }
.pc { letter-spacing: -.500px; }

/* Browser window */
.browser { width: 960px; background: #fff; display: grid; grid-template-rows: 42px 40px 47px 901px; }
.tabs { background: #fda98e; display: flex; align-items: center; color: #5d443c; }
.tab { width: 181px; height: 24px; border-right: 1px solid #b47c6a; display: flex; align-items: center; padding: 0 11px 0 14px; white-space: nowrap; }
.tab.first { width: 140px; padding-left: 2px; }
.tab.last { width: 180px; }
.tab span { flex: 1; overflow: hidden; margin: -1px 6px 0 9px; letter-spacing: .100px; -webkit-mask: linear-gradient(90deg, #000 80%, transparent); mask: linear-gradient(90deg, #000 80%, transparent); }
.tab.first span { margin-left: 0; }
.x { width: 18px; height: 18px; }
.plus { margin-left: 19px; }
.winctl { display: grid; grid-template-columns: 56px 58px 14px; margin: -5px 0 0 95px; }
.address { display: flex; align-items: center; padding-top: 5px; }
.pill { width: 604px; height: 35px; border-radius: 0 18px 18px 0; background: #f1f3f4; display: flex; align-items: center; font-size: 17px; letter-spacing: -.080px; color: #80868b; padding-left: 1px; }
.pill span { width: 531px; line-height: 33px; white-space: nowrap; }
.star { margin-left: 21px; }
.ext { display: grid; grid-template-columns: repeat(6, 40px) 16px 51px 4px; align-items: center; padding-left: 20px; }
.vsep { display: block; width: 1px; height: 20px; background: #c4c6c8; }
.bookmarks { display: grid; grid-template-columns: 26px 29px 163px 29px 164px 29px 319px 21px 15px 29px 116px; align-items: center; padding: 0 0 0 2px; border-bottom: 1px solid #b0b0b0; margin-bottom: 1px; color: #3c4043; white-space: nowrap; }
.loose { letter-spacing: .290px; }
.more { font-size: 18px; line-height: 16px; margin-top: -4px; }

.viewport { display: grid; grid-template-columns: 413px 526px 21px; height: 901px; }
.page { background: #b8becb; overflow: hidden; font-family: Roboto, sans-serif; font-size: 20px; color: #3b4557; }
.page::before { content: ""; display: block; height: 14px; border-bottom: 1px solid #9aa7bb; }
.line { display: flex; justify-content: flex-end; white-space: pre; height: 28px; line-height: 28px; letter-spacing: -.050px; }
.line b { color: #1e293b; letter-spacing: -.100px; font-weight: 700; }
.page s { text-decoration: none; padding-bottom: 1px; background: linear-gradient(135deg, transparent 45%, #c8202f 45% 80%, transparent 80%) 0 100% / 4px 3px repeat-x, linear-gradient(45deg, transparent 45%, #c8202f 45% 80%, transparent 80%) 2px 100% / 4px 3px repeat-x; }
.page .title { height: 50px; line-height: 50px; margin-top: 56px; font-size: 40px; font-weight: 500; color: #060c18; width: 173px; letter-spacing: -.300px; }
.meta { height: 20px; line-height: 20px; margin-top: 24px; font-size: 15px; color: #78869c; width: 122px; letter-spacing: 0; }
.desc { height: 24px; line-height: 24px; margin-top: 46px; color: #5d646f; width: 133px; }
.page hr { border: 0; height: 1px; background: #a6b0c0; margin: 58px 0 0; }
.p1 { margin-top: 41px; width: 412px; }
.p2 { margin-top: 33px; width: 22px; }
.code { margin-top: 32px; height: 54px; line-height: 55px; background: #b0b7c5; font-family: "DejaVu Sans Mono", monospace; font-size: 15.500px; letter-spacing: .870px; padding-right: 220px; }
.p3 { margin-top: 32px; width: 305px; }
.p4 { margin-top: 34px; width: 413px; }
.p5 { margin-top: 34px; width: 155px; }
.p6 { margin-top: 33px; width: 151px; }
.p7 { margin-top: 33px; width: 367px; color: #78889c; }

.panel { border-left: 1px solid #e6ecf1; font-family: Roboto, sans-serif; }
.panel header { width: 480px; height: 100px; border-bottom: 1px solid #e2e8f0; display: flex; align-items: center; justify-content: space-between; padding: 0 22px 0 29px; }
.panel h2 { font-size: 15.500px; font-weight: 700; letter-spacing: 1.250px; color: #74818f; }
.drop { width: 421px; height: 224px; margin: 30px 0 0 29px; border: 1px dashed #d5dde5; border-radius: 4px; display: flex; flex-direction: column; align-items: center; padding-top: 62px; font-size: 20px; color: #9daab9; }
.drop p { line-height: 32px; margin-top: 13px; }
.drop a { line-height: 32px; color: #3884ff; text-decoration: underline 2px; text-underline-offset: 2px; }
.pscroll { background: #f1f1f1; display: flex; flex-direction: column; align-items: center; padding-top: 9px; }
.pscroll i { width: 17px; height: 786px; margin: 81px 0 7px; background: #c1c1c1; }

/* Taskbar */
.taskbar { background: linear-gradient(90deg, #522418 0 1400px, #5e2917 1530px, #522418 1680px); display: flex; justify-content: space-between; color: #fff; }
.apps { display: flex; }
.apps span { position: relative; width: 62px; height: 50px; display: grid; place-items: center; }
.apps .sys { width: 60px; }
.apps .tv { width: 63px; }
.mail i { position: absolute; left: 36px; top: 24px; width: 20px; height: 20px; border-radius: 50%; background: #8c2f14; border: 1px solid #c08a7a; font-size: 13px; font-weight: 600; line-height: 18px; text-align: center; letter-spacing: -.500px; }
.run::after { content: ""; position: absolute; left: 6px; right: 5px; bottom: 0; height: 3px; background: #fcc4b4; }
.chrome::after { background: linear-gradient(90deg, #fcc4b4 0 40px, #7d5248 40px 41px, #c39a8e 41px); }
.active { background: #8e3a20; }
.active::after { left: 0; right: 0; }
.tray { width: 367px; display: grid; grid-template-columns: 50px 46px 28px 33px 27px 34px 98px 45px 1px; align-items: center; }
.in { font-size: 13px; margin: -5px 0 0 -1px; }
.clock { width: 75px; line-height: 23px; text-align: center; margin-top: -2px; }
.peek { width: 1px; height: 50px; background: #8a6a60; }
```
